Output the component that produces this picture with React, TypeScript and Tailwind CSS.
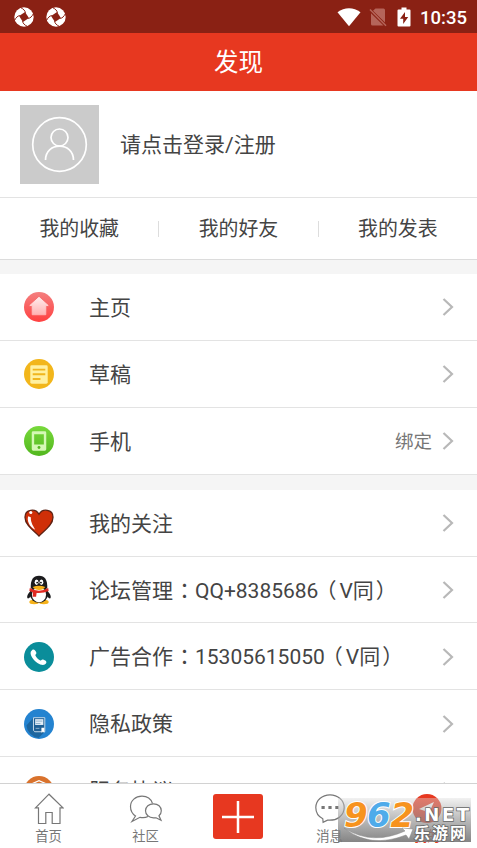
import type { ReactNode } from 'react'

const cjk = "font-['Roboto','Noto_Sans_CJK_SC',sans-serif]"

function Swirl() {
  return (
    <svg width="20" height="20" viewBox="0 0 20 20">
      <circle cx="10" cy="10" r="9.700" fill="#fff" />
      <path d="M10 5 15 10 10 15 5 10Z" fill="#8a2114" transform="rotate(12 10 10)" />
      {[0, 90, 180, 270].map((a) => (
        <path key={a} transform={`rotate(${a} 10 10)`} d="M11.500 5.800C11 3.500 9.500 2 6.500 .5" fill="none" stroke="#8a2114" strokeWidth="1" />
      ))}
    </svg>
  )
}

function StatusBar() {
  return (
    <div className="flex h-[33px] shrink-0 items-center bg-[#8a2114] pl-[14px] pr-[10px]">
      <div className="flex gap-3">
        <Swirl />
        <Swirl />
      </div>
      <svg className="ml-auto" width="24" height="20" viewBox="0 0 24 20" fill="#fff">
        <path d="M.5 5.200C7.500-.2 16.500-.2 23.500 5.200L12 19.300Z" />
      </svg>
      <svg className="ml-2" width="18" height="20" viewBox="0 0 18 20">
        <path d="M6.500 1.500H14.500a1.500 1.500 0 0 1 1.500 1.500V15.500L4 3.800ZM2 6.200 14.500 18.500H3.500A1.500 1.500 0 0 1 2 17Z" fill="#b5655a" />
        <path d="M1 2.500 17 18.800" stroke="#b5655a" strokeWidth="1.500" />
      </svg>
      <svg className="ml-[10px]" width="14" height="20" viewBox="0 0 14 20">
        <path d="M4.500.5h5v2H12.500a1 1 0 0 1 1 1V18.500a1 1 0 0 1-1 1h-11a1 1 0 0 1-1-1V3.500a1 1 0 0 1 1-1h3Z" fill="#fff" />
        <path d="M8 5 3 11.800H6.200V17L11.200 10H8Z" fill="#8a2114" />
      </svg>
      <span className="ml-[9px] w-[47px] pt-[3px] text-[18.500px] leading-none font-medium whitespace-nowrap text-white">10:35</span>
    </div>
  )
}

function HomeIcon() {
  return (
    <svg width="30" height="30" viewBox="0 0 31 31">
      <defs>
        <linearGradient id="home" x2="0" y2="1">
          <stop stopColor="#f47f7f" />
          <stop offset="1" stopColor="#ff4040" />
        </linearGradient>
        <linearGradient id="house" x2="0" y2="1">
          <stop stopColor="#ffecec" />
          <stop offset="1" stopColor="#ffb3b3" />
        </linearGradient>
      </defs>
      <circle cx="15.500" cy="15.500" r="15.500" fill="url(#home)" />
      <path d="M15.500 5.500 25 14H22.500V23.500H8.500V14H6Z" fill="url(#house)" stroke="url(#house)" strokeLinejoin="round" />
    </svg>
  )
}

function DraftIcon() {
  return (
    <svg width="30" height="30" viewBox="0 0 31 31">
      <circle cx="15.500" cy="15.500" r="15.500" fill="#f2b61b" />
      <rect x="6.500" y="6.500" width="18" height="19" rx="1.500" fill="#fff0a0" />
      <path d="M9 11H22M9 15.800H22M9 20.600H17" stroke="#f0b51d" strokeWidth="2" />
    </svg>
  )
}

function PhoneIcon() {
  return (
    <svg width="30" height="30" viewBox="0 0 31 31">
      <defs>
        <linearGradient id="phone" x2="0" y2="1">
          <stop stopColor="#78d93c" />
          <stop offset="1" stopColor="#52b71e" />
        </linearGradient>
      </defs>
      <circle cx="15.500" cy="15.500" r="15.500" fill="url(#phone)" />
      <path fillRule="evenodd" d="M9.500 5.500h12a1.500 1.500 0 0 1 1.500 1.500v17a1.500 1.500 0 0 1-1.500 1.500h-12A1.500 1.500 0 0 1 8 24V7a1.500 1.500 0 0 1 1.500-1.500ZM10.500 8.500V19h10V8.500Z" fill="#d5f8b5" />
      <circle cx="15.500" cy="22.200" r="1.500" fill="#55b722" />
    </svg>
  )
}

function HeartIcon() {
  return (
    <svg width="30" height="30" viewBox="0 0 31 31">
      <path d="M15.500 29C12 24.500 1 18.500 1 9.500 1 1 12 0 15.500 6.500 19 0 30 1 30 9.500 30 18.500 19 24.500 15.500 29Z" fill="#cf2f08" stroke="#5c2113" strokeWidth="1.300" />
      <path d="M4.300 8.500C2.800 13 5.500 19.500 11.500 22.500 10 19 7 16 7 9.500Z" fill="#fff" />
      <circle cx="7" cy="4.700" r="1.600" fill="#fff" />
    </svg>
  )
}

function PenguinIcon() {
  return (
    <svg width="30" height="30" viewBox="0 0 31 31">
      <path d="M8.500 15C4.500 18 2 23 4 24.200 5.500 24.500 7.500 21.500 7.500 21.500ZM22.500 15C26.500 18 29 23 27 24.200 25.500 24.500 23.500 21.500 23.500 21.500Z" fill="#1b1b1d" />
      <ellipse cx="10.500" cy="28" rx="5" ry="2.300" fill="#f6b21a" />
      <ellipse cx="20.500" cy="28" rx="5" ry="2.300" fill="#f6b21a" />
      <ellipse cx="15.500" cy="19.500" rx="9.500" ry="9.300" fill="#1b1b1d" />
      <path d="M7 14C6.500 5 9.500 .8 15.500 .8S24.500 5 24 14Z" fill="#1b1b1d" />
      <ellipse cx="15.500" cy="20.500" rx="7.300" ry="7.700" fill="#fff" />
      <ellipse cx="13" cy="7.500" rx="2" ry="2.800" fill="#fff" />
      <ellipse cx="18" cy="7.500" rx="2" ry="2.800" fill="#fff" />
      <circle cx="13.600" cy="7.800" r=".9" />
      <circle cx="17.500" cy="7.800" r=".9" />
      <path d="M9 12.500Q15.500 9.500 22 12.500 20 15.500 15.500 15.500T9 12.500Z" fill="#f6b21a" />
      <path d="M6 13.500Q15.500 19 25 13.500L25.500 16.500Q20 19 13 18.500L12.500 22.500H9L9.300 18 5.500 16.500Z" fill="#e02a24" />
    </svg>
  )
}

function CallIcon() {
  return (
    <svg width="30" height="30" viewBox="0 0 31 31">
      <circle cx="15.500" cy="15.500" r="15.500" fill="#0a8d9a" />
      <path d="M8.500 8.200C10 7 12 8.500 12.800 11.200 13.100 12.400 11.500 13 11.700 13.800 12.500 16 14.500 18 16.800 19 17.800 19.300 18.200 17.700 19.500 18 22.200 18.800 24 20.200 22.800 22 20 26.500 12 21 9.500 17.500 7 14 5.500 10.500 8.500 8.200Z" fill="#fff" />
    </svg>
  )
}

function PolicyIcon() {
  return (
    <svg width="30" height="30" viewBox="0 0 31 31">
      <circle cx="15.500" cy="15.500" r="15.500" fill="#2483d0" />
      <path d="M9.500 9 2.500 17A14.500 14.500 0 0 0 15 30L21.500 23.500Z" fill="#1d669f" />
      <path d="M9.800 9H21.500V23.500H11L9.800 22Z" fill="#1e5f94" stroke="#c9dcea" />
      <path d="M11.500 10.500H20V16.500H11.500Z" fill="#e3eef7" />
      <path d="M12 12.500H19M12 15H17M12 20H16" stroke="#8fb1cc" />
      <path d="M18 19.500H21V24.500L19.500 23.200 18 24.500Z" fill="#fff" />
    </svg>
  )
}

function TermsIcon() {
  return (
    <svg width="30" height="30" viewBox="0 0 31 31">
      <circle cx="15.500" cy="15.500" r="15.500" fill="#d9722c" />
      <path d="M6 9 15.500 4.800 25 9V18L15.500 25 6 18Z" fill="none" stroke="#fff" strokeWidth="1.300" />
      <path d="M10 10.500 15.500 7.500 21 10.500" fill="none" stroke="#fff" />
    </svg>
  )
}

const nudge: Record<string, string> = {
  '：': 'ml-px',
  '（': '-ml-[3px] mr-[3px]',
  '）': 'ml-[2px]',
}

// full-width punctuation sits in the middle of its box
function Label({ text }: { text: string }) {
  return (
    <>
      {text.split(/([：（）])/).map((part, i) =>
        nudge[part] ? (
          <span key={i} lang="zh-TW" className={`font-['Noto_Sans_CJK_TC',sans-serif] leading-none ${nudge[part]}`}>{part}</span>
        ) : (
          part
        ),
      )}
    </>
  )
}

function Row({ icon, label, extra }: { icon: ReactNode; label: string; extra?: string }) {
  return (
    <div className="flex h-[66.900px] shrink-0 items-center border-b border-[#e3e3e3] pt-px pr-[23px] pl-6 text-[#444]">
      {icon}
      <span className="ml-[35px] pt-px text-[21px] leading-6 whitespace-nowrap">
        <Label text={label} />
      </span>
      {extra && <span className="ml-auto pt-[2px] text-[18.500px] leading-6 text-[#777]">{extra}</span>}
      <svg className={extra ? 'ml-[10px]' : 'ml-auto'} width="12" height="18" viewBox="0 0 12 18" fill="none" stroke="#b8b8b8" strokeWidth="2.200">
        <path d="M1.500 1 10 9 1.500 17" />
      </svg>
    </div>
  )
}

function Watermark() {
  return (
    <div className="absolute top-[14px] left-[338px] h-[44px] w-[133px] bg-linear-to-b from-[#ddd]/40 to-[#777]/90">
      <svg className="overflow-visible" width="133" height="44" viewBox="0 0 133 44">
        <g fontFamily="DejaVu Sans" fontWeight="bold" fontStyle="italic" fontSize="34" stroke="#fff" strokeWidth="2" paintOrder="stroke">
          <text x="6" y="28.500" fill="#f7931e">9</text>
          <text x="29" y="28.500" fill="#4fabea">6</text>
          <text x="52.500" y="28.500" fill="#f7931e">2</text>
        </g>
        <path d="M6 30Q34 48 67 33L64 30 75 31 71 41 68 37Q32 51 6 30Z" fill="#fff" stroke="#888" strokeWidth=".5" />
        <g fill="#fff" stroke="#666" strokeWidth="1.500" paintOrder="stroke" fontWeight="bold">
          <text x="77" y="23" fontFamily="DejaVu Sans" fontSize="18" textLength="54">.NET</text>
          <text x="76" y="41" fontFamily="Noto Sans CJK SC" fontSize="16" textLength="52">乐游网</text>
        </g>
      </svg>
    </div>
  )
}

const tabText = 'text-[13.300px] leading-4 text-[#777]'

function TabBar() {
  return (
    <nav className="relative flex h-[65px] shrink-0 border-t border-[#d2d2d2] bg-white pt-[9px]">
      <div className="flex w-[97px] flex-col items-center">
        <svg width="30" height="32" viewBox="0 0 30 32" fill="none" stroke="#777" strokeWidth="1.200">
          <path d="M15 1.200 1.500 14.800H4.500V30.500H11.800V19.500H18.200V30.500H26V14.800H29Z" />
        </svg>
        <span className={`mt-[4px] ${tabText}`}>首页</span>
      </div>
      <div className="flex w-[97px] flex-col items-center">
        <svg width="34" height="32" viewBox="0 0 34 32" fill="none" stroke="#777" strokeWidth="1.200">
          <path d="M23.500 10.500C22 6 18 3.200 13 3.200 6.500 3.200 1.500 7.500 1.500 13.500c0 4.500 2 7.500 5 9.500l-3.500 5.500 8-4.200c3 .6 6 .2 8-.8" />
          <path d="M24.500 10.800c-4.500 0-8 3-8 7s3.500 7 8 7h2.500l5 2.500-2-4.500c1.500-1.300 2.300-3 2.300-5 0-4-3.300-7-7.800-7Z" />
        </svg>
        <span className={`mt-[4px] ${tabText}`}>社区</span>
      </div>
      <div className="mt-px ml-[19px] flex h-[45px] w-[50px] items-center justify-center rounded-[3px] bg-[#e73820]">
        <svg width="32" height="32" viewBox="0 0 32 32" stroke="#fff" strokeWidth="2.500">
          <path d="M16 0V32M0 16H32" />
        </svg>
      </div>
      <div className="ml-[18px] flex w-[97px] flex-col items-center">
        <svg width="32" height="32" viewBox="0 0 32 32" fill="none" stroke="#777" strokeWidth="1.200">
          <path d="M16 1.800C8 1.800 1.800 7.400 1.800 14.600c0 5 2.500 9 7 11.200l.3 3.500 4.400-2.200C23 28 30.200 22.500 30.200 14.600 30.200 7.400 24 1.800 16 1.800Z" />
          <path d="M7.500 14.500h3.200M14.400 14.500h3.200M21.300 14.500h3.200" strokeWidth="3" />
        </svg>
        <span className={`mt-[4px] ${tabText}`}>消息</span>
      </div>
      <div className="flex w-[98px] flex-col items-center">
        <svg width="30" height="32" viewBox="0 0 30 32">
          <circle cx="15" cy="15.500" r="14.500" fill="#e73820" />
          <path d="M22 9 7 16l6 2 2 6Z" fill="#fff" />
        </svg>
        <span className="mt-[4px] text-[13.300px] leading-4 text-[#e73820]">我的</span>
      </div>
      <Watermark />
    </nav>
  )
}

export default function App() {
  return (
    <div lang="zh-CN" className={`flex h-[848px] w-[477px] flex-col overflow-hidden bg-white ${cjk}`}>
      <StatusBar />
      <header className="flex h-[58px] shrink-0 items-center justify-center bg-[#e73820] pt-[3px] text-[24.500px] text-white">发现</header>
      <main className="flex min-h-0 flex-1 flex-col overflow-hidden bg-[#f5f5f5]">
        <section className="shrink-0 border-b border-[#dcdcdc] bg-white">
          <div className="flex h-[107px] items-center border-b border-[#e3e3e3] pl-5">
            <div className="flex size-[79px] items-center justify-center bg-[#cbcbcb]">
              <svg width="57" height="57" viewBox="0 0 57 57" fill="none" stroke="#fff" strokeWidth="1.700">
                <circle cx="28.500" cy="28.500" r="26.800" />
                <circle cx="28.500" cy="21.500" r="8.500" />
                <path d="M14.500 44C14.500 25.500 42.500 25.500 42.500 44" />
              </svg>
            </div>
            <span className="ml-[21px] pt-1 text-[21px] text-[#444]">请点击登录/注册</span>
          </div>
          <div className="flex h-[61px] items-center text-[19.900px] text-[#444]">
            <span className="flex-1 pt-[3px] text-center">我的收藏</span>
            <span className="h-4 w-px bg-[#ddd]" />
            <span className="flex-1 pt-[3px] text-center">我的好友</span>
            <span className="h-4 w-px bg-[#ddd]" />
            <span className="flex-1 pt-[3px] text-center">我的发表</span>
          </div>
        </section>
        <section className="mt-[14px] shrink-0 bg-white">
          <Row icon={<HomeIcon />} label="主页" />
          <Row icon={<DraftIcon />} label="草稿" />
          <Row icon={<PhoneIcon />} label="手机" extra="绑定" />
        </section>
        <section className="mt-[15px] shrink-0 bg-white">
          <Row icon={<HeartIcon />} label="我的关注" />
          <Row icon={<PenguinIcon />} label="论坛管理：QQ+8385686（V同）" />
          <Row icon={<CallIcon />} label="广告合作：15305615050（V同）" />
          <Row icon={<PolicyIcon />} label="隐私政策" />
          <Row icon={<TermsIcon />} label="服务协议" />
        </section>
      </main>
      <TabBar />
    </div>
  )
}
